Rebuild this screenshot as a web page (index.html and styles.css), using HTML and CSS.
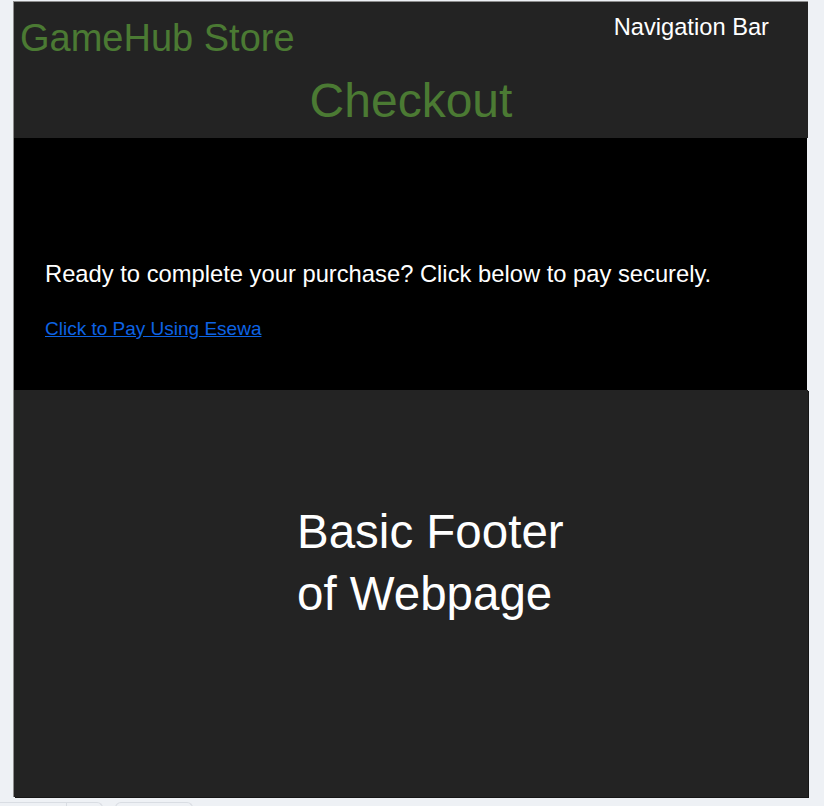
FILE: index.html
```html
<!DOCTYPE html>
<html lang="en">
<head>
<meta charset="utf-8">
<title>GameHub Store - Checkout</title>
<link rel="stylesheet" href="styles.css">
</head>
<body>
<div class="page">
  <header class="site-header">
    <div class="header-row">
      <div class="logo">GameHub Store</div>
      <nav class="nav">Navigation Bar</nav>
    </div>
    <h1 class="title">Checkout</h1>
  </header>
  <main class="checkout">
    <p class="lead">Ready to complete your purchase? Click below to pay securely.</p>
    <p class="pay"><a href="#" class="pay-link">Click to Pay Using Esewa</a></p>
  </main>
  <footer class="site-footer">
    <div class="footer-text">Basic Footer of Webpage</div>
  </footer>
</div>
<div class="tabs">
  <div class="tab tab-split"><span class="tab-part"></span><span class="tab-part"></span></div>
  <div class="tab tab-small"></div>
</div>
</body>
</html>
```
FILE: styles.css
```css
html, body {
  margin: 0;
  padding: 0;
}
body {
  background: #eef1f5;
  font-family: "Liberation Sans", Arial, sans-serif;
  width: 824px;
  height: 806px;
  overflow: hidden;
}
.page {
  width: 795px;
  margin: 1px 0 0 13px;
  border-top: 1px solid #8e8e8e;
  border-left: 1px solid #8e8e8e;
  box-sizing: border-box;
}
.site-header {
  background: #232323;
  padding-bottom: 10px;
}
.header-row {
  display: flex;
  justify-content: space-between;
  align-items: flex-start;
  padding: 0 39px 0 6px;
}
.logo {
  color: #4b7a33;
  font-size: 38px;
  line-height: 44px;
  margin-top: 14px;
}
.nav {
  color: #ffffff;
  font-size: 23.7px;
  line-height: 28px;
  margin-top: 11px;
}
.title {
  margin: 13px 0 0;
  text-align: center;
  color: #4b7a33;
  font-size: 48px;
  font-weight: normal;
  line-height: 55px;
}
.checkout {
  background: #000000;
  height: 252px;
  box-sizing: border-box;
  padding: 121.6px 0 0 31px;
  margin-right: 1px;
}
.lead {
  margin: 0;
  color: #ffffff;
  font-size: 23.75px;
  line-height: 27.6px;
}
.pay {
  margin: 31px 0 0;
  font-size: 19px;
  line-height: 22px;
}
.pay-link {
  color: #0d63e4;
  text-decoration: underline;
}
.site-footer {
  background: #232323;
  height: 407px;
  box-sizing: border-box;
  padding: 111.4px 0 0 283px;
  box-shadow: 1px 1px 0 #161616;
}
.footer-text {
  width: 290px;
  color: #ffffff;
  font-size: 47.5px;
  line-height: 62px;
}
.tabs {
  display: flex;
  gap: 12px;
  margin-top: 5px;
}
.tab {
  height: 10px;
  border: 1px solid #d9dde3;
  border-bottom: none;
  border-radius: 6px 6px 0 0;
  box-sizing: border-box;
}
.tab-split {
  width: 103px;
  display: flex;
  border-left: none;
  border-radius: 0 6px 0 0;
}
.tab-part {
  flex: 0 0 66px;
  border-right: 1px solid #d9dde3;
}
.tab-part + .tab-part {
  flex: 1;
  border-right: none;
}
.tab-small {
  width: 78px;
}
```
